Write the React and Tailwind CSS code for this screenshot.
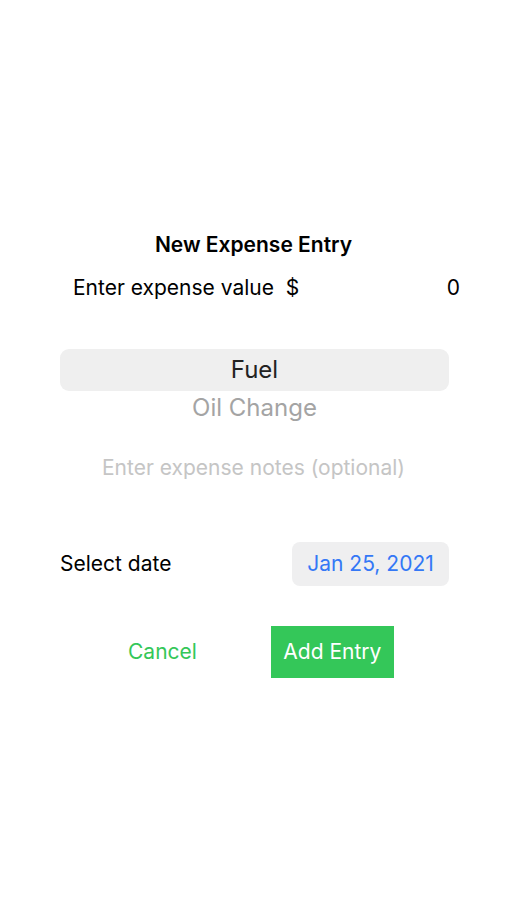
import { useState } from "react";

export default function App() {
  const [value, setValue] = useState("0");
  const [notes, setNotes] = useState("");

  return (
    <div
      className="w-[507px] h-[900px] bg-white flex flex-col text-black"
      style={{ fontFamily: "Inter, 'Noto Sans', sans-serif" }}
    >
      <div className="pt-[232px]">
        <h1 className="text-center text-[21px] leading-[26px] font-semibold">New Expense Entry</h1>
      </div>

      <div className="flex items-center justify-between pl-[73px] pr-[47px] mt-[17px] h-[26px]">
        <span className="text-[21px]">Enter expense value&nbsp;&nbsp;$</span>
        <input
          value={value}
          onChange={(e) => setValue(e.target.value)}
          className="w-[80px] text-right text-[21px] outline-none bg-transparent"
        />
      </div>

      <div className="ml-[60px] mr-[58px] mt-[48px]">
        <div className="h-[42px] rounded-[9px] bg-[#efefef] flex items-center justify-center text-[24px] text-[#222]">
          Fuel
        </div>
        <div className="h-[34px] flex items-center justify-center text-[24px] text-[#a4a4a4]">
          Oil Change
        </div>
      </div>

      <div className="mt-[27px] flex justify-center">
        <input
          value={notes}
          onChange={(e) => setNotes(e.target.value)}
          placeholder="Enter expense notes (optional)"
          className="w-[420px] text-center text-[21px] outline-none placeholder-[#c5c5c5]"
        />
      </div>

      <div className="flex items-center justify-between ml-[60px] mr-[58px] mt-[58px]">
        <span className="text-[21px]">Select date</span>
        <button className="h-[44px] w-[157px] rounded-[8px] bg-[#efeff0] text-[#3478f6] text-[21px]">
          Jan 25, 2021
        </button>
      </div>

      <div className="flex items-center mt-[40px] pl-[128px]">
        <button className="text-[21px] text-[#34c759]">Cancel</button>
        <button className="ml-[74px] h-[52px] w-[123px] bg-[#34c759] text-white text-[21px]">
          Add Entry
        </button>
      </div>
    </div>
  );
}
